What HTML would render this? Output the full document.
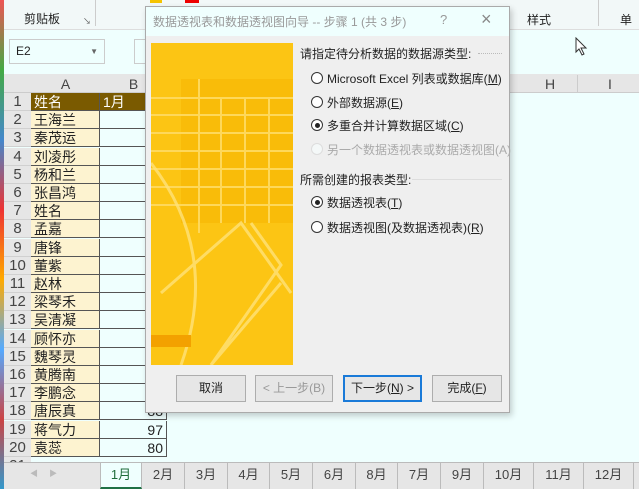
<!DOCTYPE html>
<html><head><meta charset="utf-8"><style>
*{margin:0;padding:0;box-sizing:border-box}
body{width:639px;height:489px;overflow:hidden;background:#effffe;font-family:"Liberation Sans","Noto Sans CJK SC",sans-serif;position:relative;font-size:13px;color:#222}
.a{position:absolute}
.cell{position:absolute;border-right:1px solid #555;border-bottom:1px solid #555;height:18px;line-height:18px}
.rn{position:absolute;left:4px;width:27px;text-align:center;color:#444;font-size:15px;height:18px;line-height:18px;background:#e6e6e6;border-bottom:1px solid #d0d0d0}
.btn{position:absolute;top:375px;height:27px;border:1px solid #adadad;background:#e6e6e6;text-align:center;line-height:25px;font-size:12px}
.rad{position:absolute;width:12px;height:12px;border:1px solid #333;border-radius:50%;background:#fff}
.rad.on::after{content:"";position:absolute;left:2.5px;top:2.5px;width:5px;height:5px;border-radius:50%;background:#222}
.opt{position:absolute;font-size:12px;color:#222}
.tab{position:absolute;top:463px;height:26px;line-height:24px;font-size:13px;color:#444;text-align:center;border-right:1px solid #bbb}
</style></head><body>
<div class="a" style="left:0;top:0;width:639px;height:30px;background:#f2f8f8;border-bottom:1px solid #ddd"></div>
<div class="a" style="left:24px;top:10px;font-size:12px">剪贴板</div>
<div class="a" style="left:83px;top:16px;font-size:8px;color:#555">↘</div>
<div class="a" style="left:95px;top:0;width:1px;height:26px;background:#ccc"></div>
<div class="a" style="left:150px;top:0;width:12px;height:3px;background:#f5c400"></div>
<div class="a" style="left:185px;top:0;width:14px;height:3px;background:#e00"></div>
<div class="a" style="left:527px;top:11px;font-size:12px">样式</div>
<div class="a" style="left:598px;top:0;width:1px;height:26px;background:#ccc"></div>
<div class="a" style="left:620px;top:11px;font-size:12px">单元</div>
<div class="a" style="left:0;top:0;width:4px;height:489px;background:linear-gradient(#e55,#4a4,#48c,#e33,#fa0,#5af,#c44,#39c)"></div>
<div class="a" style="left:4px;top:30px;width:635px;height:36px;background:#effffe"></div>
<div class="a" style="left:9px;top:39px;width:96px;height:25px;border:1px solid #ccc;background:#effffe;font-size:12px;line-height:23px;padding-left:6px">E2<span style="position:absolute;right:6px;font-size:8px;color:#666">▼</span></div>
<div class="a" style="left:134px;top:39px;width:12px;height:25px;border:1px solid #ccc"></div>
<div class="a" style="left:4px;top:74px;width:635px;height:19px;background:#e6e6e6;border-bottom:1px solid #ccc"></div>
<div class="a" style="left:31px;top:76px;width:69px;text-align:center;font-size:14px;color:#444">A</div>
<div class="a" style="left:100px;top:76px;width:67px;text-align:center;font-size:14px;color:#444">B</div>
<div class="a" style="left:510px;top:76px;width:80px;text-align:center;font-size:14px;color:#444">H</div>
<div class="a" style="left:590px;top:76px;width:40px;text-align:center;font-size:14px;color:#444">I</div>
<div class="a" style="left:577px;top:75px;width:1px;height:17px;background:#ccc"></div>
<div id="g"></div>
<script>
var n=["姓名","王海兰","秦茂运","刘凌彤","杨和兰","张昌鸿","姓名","孟嘉","唐锋","董紫","赵林","梁琴禾","吴清凝","顾怀亦","魏琴灵","黄腾南","李鹏念","唐辰真","蒋气力","袁蕊"];
var v={18:"88",19:"97",20:"80"};var h="";
for(var i=0;i<21;i++){var t=93+i*18.2;
h+='<div class="rn" style="top:'+t+'px">'+(i+1)+'</div>';
if(i<20){var hd=i==0;
h+='<div class="cell" style="left:31px;top:'+t+'px;width:69px;padding-left:3px;font-size:14px;background:'+(hd?'#7a5a00;color:#fff':'#fdf3d0')+'">'+n[i]+'</div>';
h+='<div class="cell" style="left:100px;top:'+t+'px;width:67px;text-align:right;padding-right:3px;font-size:14px;background:'+(hd?'#7a5a00;color:#fff;text-align:left;padding-left:3px':'#effffe')+'">'+(hd?'1月':(v[i+1]||''))+'</div>';}}
document.getElementById('g').innerHTML=h;
</script>
<div class="a" style="left:4px;top:462px;width:635px;height:27px;background:#e6e6e6;border-top:1px solid #bbb"></div>
<div class="a" style="left:30px;top:468px;font-size:8px;color:#bbb">◀&nbsp;&nbsp;&nbsp;&nbsp;&nbsp;▶</div>
<div class="tab" style="left:100px;width:42px;background:#effffe;color:#1e6b3a;border-bottom:2px solid #1e7145;border-left:1px solid #bbb">1月</div>
<div class="tab" style="left:142px;width:43px">2月</div>
<div class="tab" style="left:185px;width:43px">3月</div>
<div class="tab" style="left:228px;width:42px">4月</div>
<div class="tab" style="left:270px;width:43px">5月</div>
<div class="tab" style="left:313px;width:43px">6月</div>
<div class="tab" style="left:356px;width:42px">8月</div>
<div class="tab" style="left:398px;width:43px">7月</div>
<div class="tab" style="left:441px;width:43px">9月</div>
<div class="tab" style="left:484px;width:50px">10月</div>
<div class="tab" style="left:534px;width:50px">11月</div>
<div class="tab" style="left:584px;width:50px">12月</div>
<div class="a" style="left:145px;top:6px;width:365px;height:407px;background:#efefef;border:1px solid #aaa;box-shadow:2px 3px 6px rgba(0,0,0,.2)"></div>
<div class="a" style="left:146px;top:7px;width:363px;height:29px;background:#effffe"></div>
<div class="a" style="left:153px;top:13px;font-size:12px;color:#999">数据透视表和数据透视图向导 -- 步骤 1 (共 3 步)</div>
<div class="a" style="left:440px;top:12px;font-size:13px;color:#999">?</div>
<div class="a" style="left:481px;top:9px;font-size:18px;color:#888">×</div>
<svg class="a" style="left:151px;top:43px" width="142" height="322" viewBox="0 0 142 322">
<rect width="142" height="322" fill="#fcc514"/>
<rect x="30" y="36" width="132" height="144" fill="#f5b400" opacity=".55"/>
<g stroke="#fed85a" stroke-width="2"><line x1="0" y1="55" x2="142" y2="55"/><line x1="0" y1="72" x2="142" y2="72"/><line x1="0" y1="90" x2="142" y2="90"/><line x1="0" y1="108" x2="142" y2="108"/><line x1="0" y1="126" x2="142" y2="126"/><line x1="0" y1="144" x2="142" y2="144"/><line x1="0" y1="162" x2="142" y2="162"/>
<line x1="48" y1="36" x2="48" y2="190"/><line x1="70" y1="55" x2="70" y2="180"/><line x1="94" y1="55" x2="94" y2="180"/><line x1="118" y1="55" x2="118" y2="180"/></g>
<g stroke="#ffe27a" stroke-width="3" fill="none" opacity=".8"><path d="M0 120 Q70 210 30 322"/><path d="M10 250 L90 180 L140 250"/><path d="M60 322 L130 240"/><path d="M100 180 L130 222 L60 322"/></g>
<rect x="0" y="292" width="40" height="12" fill="#f3a100"/>
</svg>
<div class="a" style="left:300px;top:45px;font-size:12px">请指定待分析数据的数据源类型:</div>
<div class="a" style="left:478px;top:53px;width:24px;border-top:1px dotted #bbb"></div>
<div class="rad" style="left:311px;top:72px"></div><div class="opt" style="left:327px;top:70px">Microsoft Excel 列表或数据库(<u>M</u>)</div>
<div class="rad" style="left:311px;top:96px"></div><div class="opt" style="left:327px;top:94px">外部数据源(<u>E</u>)</div>
<div class="rad on" style="left:311px;top:119px"></div><div class="opt" style="left:327px;top:117px">多重合并计算数据区域(<u>C</u>)</div>
<div class="rad" style="left:311px;top:143px;border-color:#ddd;background:#f4f8f8"></div><div class="opt" style="left:327px;top:141px;color:#aaa">另一个数据透视表或数据透视图(A)</div>
<div class="a" style="left:300px;top:171px;font-size:12px">所需创建的报表类型:</div>
<div class="a" style="left:412px;top:179px;width:90px;border-top:1px solid #ddd"></div>
<div class="rad on" style="left:311px;top:196px"></div><div class="opt" style="left:327px;top:194px">数据透视表(<u>T</u>)</div>
<div class="rad" style="left:311px;top:221px"></div><div class="opt" style="left:327px;top:219px">数据透视图(及数据透视表)(<u>R</u>)</div>
<div class="btn" style="left:176px;width:70px">取消</div>
<div class="btn" style="left:255px;width:78px;color:#999">&lt; 上一步(B)</div>
<div class="btn" style="left:343px;width:79px;border:2px solid #1a7ad8;line-height:23px">下一步(<u>N</u>) &gt;</div>
<div class="btn" style="left:432px;width:70px">完成(<u>F</u>)</div>
<svg class="a" style="left:575px;top:37px" width="14" height="20"><path d="M1 1 L1 15 L4 12 L7 18 L9 17 L6 11 L11 11 Z" fill="#fff" stroke="#333"/></svg>
</body></html>
